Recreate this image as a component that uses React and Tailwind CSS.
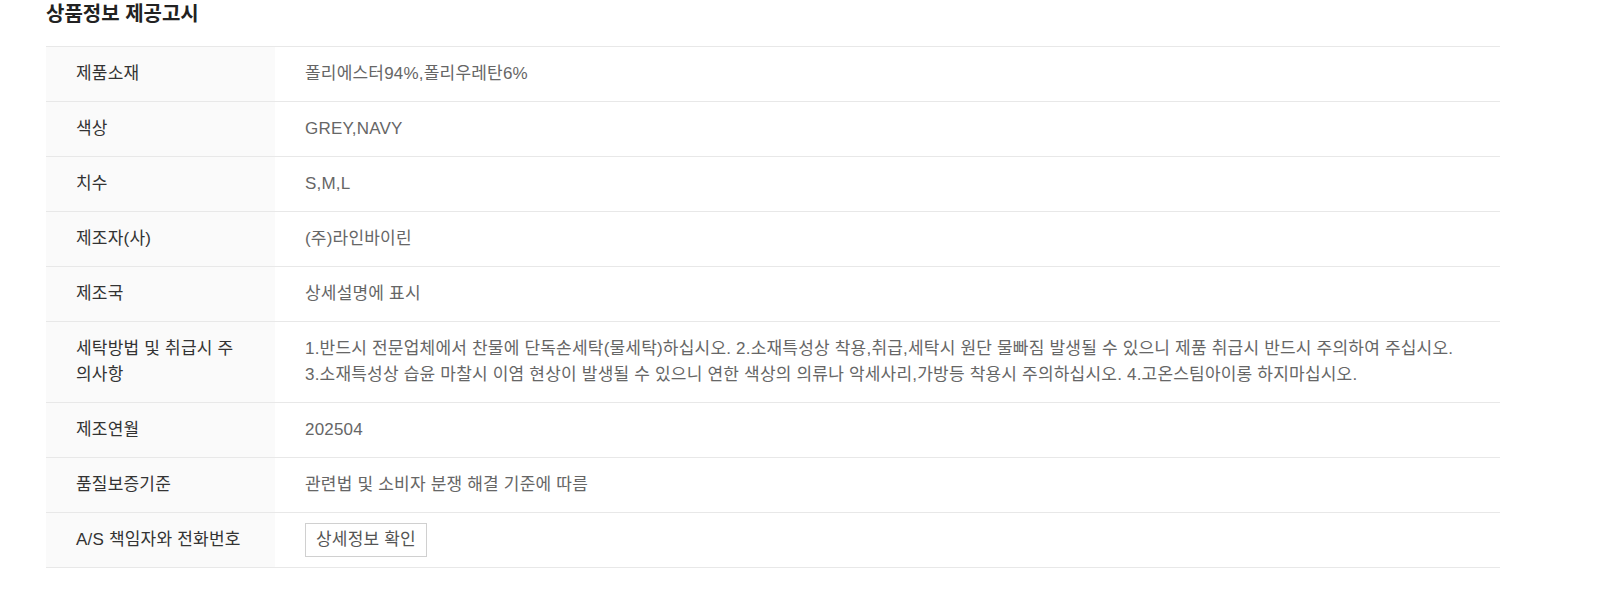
const rows = [
  { label: "제품소재", value: "폴리에스터94%,폴리우레탄6%" },
  { label: "색상", value: "GREY,NAVY" },
  { label: "치수", value: "S,M,L" },
  { label: "제조자(사)", value: "(주)라인바이린" },
  { label: "제조국", value: "상세설명에 표시" },
  {
    label: "세탁방법 및 취급시 주의사항",
    value: [
      "1.반드시 전문업체에서 찬물에 단독손세탁(물세탁)하십시오. 2.소재특성상 착용,취급,세탁시 원단 물빠짐 발생될 수 있으니 제품 취급시 반드시 주의하여 주십시오.",
      "3.소재특성상 습윤 마찰시 이염 현상이 발생될 수 있으니 연한 색상의 의류나 악세사리,가방등 착용시 주의하십시오. 4.고온스팀아이롱 하지마십시오.",
    ],
  },
  { label: "제조연월", value: "202504" },
  { label: "품질보증기준", value: "관련법 및 소비자 분쟁 해결 기준에 따름" },
];

export default function App() {
  return (
    <div
      className="min-h-screen bg-white"
      style={{ fontFamily: '"Liberation Sans", "Noto Sans CJK KR", sans-serif' }}
    >
      <div className="pl-[46px] w-[1500px]">
        <h2 className="pt-[1px] h-[46px] text-[20px] leading-[26px] font-bold text-[#222]">
          상품정보 제공고시
        </h2>

        {/* notice table */}
        <div className="border-t border-[#e8e8e8] text-[17px] leading-[26px] tracking-[0.2px]">
          {rows.map((row) => (
            <div key={row.label} className="flex border-b border-[#e8e8e8]">
              <div className="w-[229px] shrink-0 bg-[#fafafa] px-[30px] py-[14px] text-[#333] break-all">
                {row.label}
              </div>
              <div className="flex-1 px-[30px] py-[14px] text-[#666]">
                {Array.isArray(row.value)
                  ? row.value.map((line) => <div key={line}>{line}</div>)
                  : row.value}
              </div>
            </div>
          ))}

          <div className="flex border-b border-[#e8e8e8]">
            <div className="w-[229px] shrink-0 bg-[#fafafa] px-[30px] py-[14px] text-[#333]">
              A/S 책임자와 전화번호
            </div>
            <div className="flex-1 flex items-center px-[30px] py-[10px]">
              <button
                type="button"
                className="border border-[#d0d0d0] bg-white px-[10px] py-[3px] text-[#555]"
              >
                상세정보 확인
              </button>
            </div>
          </div>
        </div>
      </div>
    </div>
  );
}
